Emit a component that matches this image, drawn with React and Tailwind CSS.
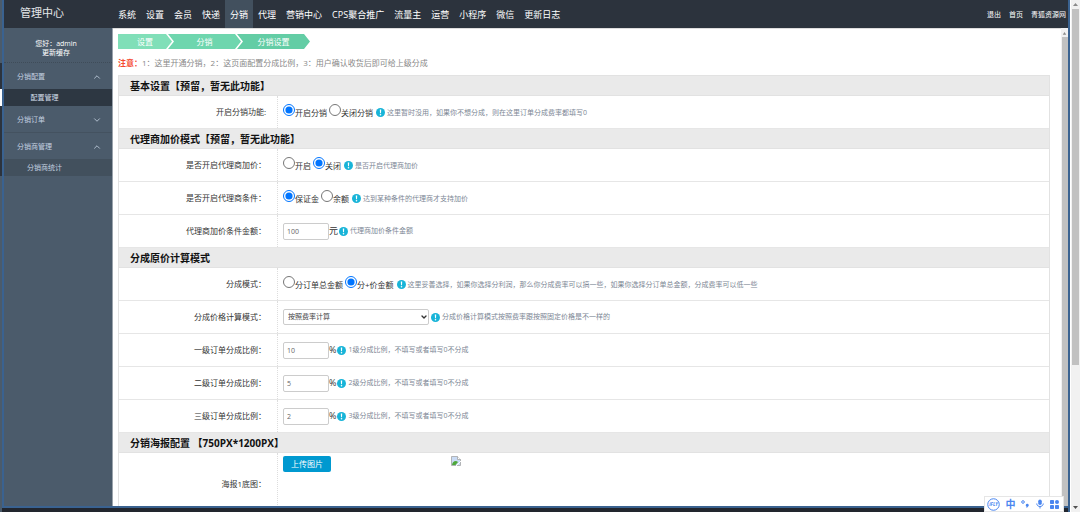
import { useState } from 'react';
import { ChevronDown, ChevronUp } from 'lucide-react';

const navItems = [
  '系统', '设置', '会员', '快递', '分销', '代理', '营销中心', 'CPS聚合推广',
  '流量主', '运营', '小程序', '微信', '更新日志',
];

const userLinks = ['退出', '首页', '青狐资源网'];

function TopBar() {
  return (
    <header className="flex h-7 shrink-0 items-center bg-[#2c333d] text-white">
      <h1 className="w-[109px] pb-0.5 pl-4 text-[11px] leading-4 text-[#e4e7ea]">管理中心</h1>
      <nav className="flex h-full flex-1">
        {navItems.map((item) => (
          <a
            key={item}
            href="#"
            className={`flex items-center px-[5px] pt-0.5 text-[9px] leading-3 ${item === '分销' ? 'bg-[#42505e]' : ''}`}
          >
            {item}
          </a>
        ))}
      </nav>
      <div className="flex gap-2 pr-0.5 pt-0.5 text-[7px] leading-3">
        {userLinks.map((item) => (
          <a key={item} href="#">{item}</a>
        ))}
      </div>
    </header>
  );
}

function MenuGroup({ title, open, children }) {
  const Icon = open ? ChevronUp : ChevronDown;
  return (
    <li>
      <button type="button" className="flex h-[26px] w-full items-center justify-between pl-[13px] pr-[10px] pt-px">
        <span>{title}</span>
        <Icon className="h-2.5 w-2.5" strokeWidth={2} />
      </button>
      {children}
    </li>
  );
}

function SideBar() {
  return (
    <aside className="w-[109px] shrink-0 border-r border-[#9aa3ac] bg-[#4b5b6b] text-[7px] leading-[9px] text-[#c3d0e0]">
      <div className="flex h-[35px] flex-col items-center justify-center border-b border-dotted border-[#3f4c59] pr-1 pt-[5px] text-white">
        <span>您好：admin</span>
        <a href="#">更新缓存</a>
      </div>
      <ul>
        <MenuGroup title="分销配置" open>
          <a href="#" className="flex h-[17px] items-center justify-center bg-[#2d3742] pr-[27px] text-[#d5dfeb]">配置管理</a>
        </MenuGroup>
        <MenuGroup title="分销订单" />
        <li className="border-t border-[#445260]" />
        <MenuGroup title="分销商管理" open>
          <a href="#" className="flex h-[17px] items-center justify-center bg-[#42505d] pr-[27px]">分销商统计</a>
        </MenuGroup>
      </ul>
    </aside>
  );
}

function Steps() {
  return (
    <ol className="flex text-center text-[8px] leading-[15px] text-white">
      <li className="w-[54px] bg-[#80dfb8] [clip-path:polygon(0_0,calc(100%-6px)_0,100%_50%,calc(100%-6px)_100%,0_100%)]">设置</li>
      <li className="-ml-1 w-[73px] bg-[#6ed6ae] [clip-path:polygon(0_0,calc(100%-6px)_0,100%_50%,calc(100%-6px)_100%,0_100%,6px_50%)]">分销</li>
      <li className="-ml-1 w-[73px] bg-[#63cda5] [clip-path:polygon(0_0,calc(100%-6px)_0,100%_50%,calc(100%-6px)_100%,0_100%,6px_50%)]">分销设置</li>
    </ol>
  );
}

function SectionTitle({ children }) {
  return (
    <h2 className="flex h-5 items-center border-b border-[#e2e2e2] bg-[#eaeaea] pl-[11px] text-[10px] font-bold leading-4 text-[#111]">
      {children}
    </h2>
  );
}

function Hint({ children }) {
  return (
    <span className="ml-px flex items-center gap-[2px] text-[7px] leading-3 text-[#7d8795]">
      <svg viewBox="0 0 18 18" className="h-[9px] w-[9px]">
        <circle cx="9" cy="9" r="9" fill="#18b4d8" />
        <path d="M7.6 3h2.8l-.5 7.4H8.1z" fill="#fff" />
        <circle cx="9" cy="13.4" r="1.6" fill="#fff" />
      </svg>
      {children}
    </span>
  );
}

function Row({ label, htmlFor, children }) {
  const LabelTag = htmlFor ? 'label' : 'span';
  return (
    <div className="flex h-[33px] border-b border-[#e6e6e6] text-[8px] leading-3 text-[#333]">
      <div className="flex w-[159px] shrink-0 items-center justify-end border-r border-dotted border-[#ddd] pr-[11px]">
        <LabelTag htmlFor={htmlFor}>{label}</LabelTag>
      </div>
      <div className="flex flex-1 items-center pl-[5px]">{children}</div>
    </div>
  );
}

function RadioRow({ label, name, options, initial, hint }) {
  const [value, setValue] = useState(initial);
  return (
    <Row label={label}>
      <div className="flex items-center pt-px" role="radiogroup" aria-label={label}>
        {options.map((option) => (
          <label key={option} className="mr-[2px] flex items-center">
            <input
              type="radio"
              name={name}
              checked={value === option}
              onChange={() => setValue(option)}
              className="mb-[6px] h-3 w-3"
            />
            {option}
          </label>
        ))}
        <Hint>{hint}</Hint>
      </div>
    </Row>
  );
}

function InputRow({ label, id, value, unit, hint }) {
  return (
    <Row label={label} htmlFor={id}>
      <input
        id={id}
        type="text"
        defaultValue={value}
        className="h-[17px] w-[46px] rounded-xs border border-[#ccc] px-[3px] text-[7px] text-[#666]"
      />
      <span className="text-[9px]">{unit}</span>
      <Hint>{hint}</Hint>
    </Row>
  );
}

function SettingsForm() {
  return (
    <form className="mr-[11px] border border-b-0 border-[#e2e2e2]">
      <SectionTitle>基本设置【预留，暂无此功能】</SectionTitle>
      <RadioRow
        label="开启分销功能:"
        name="enabled"
        options={['开启分销', '关闭分销']}
        initial="开启分销"
        hint="这里暂时没用，如果你不想分成，则在这里订单分成费率都填写0"
      />
      <SectionTitle>代理商加价模式【预留，暂无此功能】</SectionTitle>
      <RadioRow label="是否开启代理商加价：" name="markup" options={['开启', '关闭']} initial="关闭" hint="是否开启代理商加价" />
      <RadioRow
        label="是否开启代理商条件："
        name="condition"
        options={['保证金', '余额']}
        initial="保证金"
        hint="达到某种条件的代理商才支持加价"
      />
      <InputRow label="代理商加价条件金额：" id="amount" value="100" unit="元" hint="代理商加价条件金额" />
      <SectionTitle>分成原价计算模式</SectionTitle>
      <RadioRow
        label="分成模式："
        name="mode"
        options={['分订单总金额', '分+价金额']}
        initial="分+价金额"
        hint="这里妥善选择，如果你选择分利润，那么你分成费率可以搞一些，如果你选择分订单总金额，分成费率可以低一些"
      />
      <Row label="分成价格计算模式：" htmlFor="calc">
        <div className="relative mr-px">
          <select id="calc" className="block h-4 w-[146px] appearance-none rounded-xs border border-[#ccc] pl-1 text-[7px] text-[#444]">
            <option>按照费率计算</option>
            <option>按照固定价格</option>
          </select>
          <ChevronDown className="pointer-events-none absolute right-px top-1 h-2 w-2 text-[#333]" strokeWidth={4} />
        </div>
        <Hint>分成价格计算模式按照费率跟按照固定价格是不一样的</Hint>
      </Row>
      <InputRow label="一级订单分成比例：" id="level1" value="10" unit="%" hint="1级分成比例，不填写或者填写0不分成" />
      <InputRow label="二级订单分成比例：" id="level2" value="5" unit="%" hint="2级分成比例，不填写或者填写0不分成" />
      <InputRow label="三级订单分成比例：" id="level3" value="2" unit="%" hint="3级分成比例，不填写或者填写0不分成" />
      <SectionTitle>分销海报配置 【750PX*1200PX】</SectionTitle>
      <div className="flex h-[62px] text-[8px] leading-3 text-[#333]">
        <div className="flex w-[159px] shrink-0 items-center justify-end border-r border-dotted border-[#ddd] pr-[11px]">
          海报1底图：
        </div>
        <div className="flex flex-1 items-start gap-[120px] pl-[5px] pt-[3px]">
          <button type="button" className="h-4 w-12 rounded-xs bg-[#0099d0] text-white">上传图片</button>
          <BrokenImage />
        </div>
      </div>
    </form>
  );
}

function BrokenImage() {
  return (
    <svg viewBox="0 0 20 20" className="h-[10px] w-[10px]">
      <path d="M1 1h12l6 6v12H1z" fill="#c9dbf5" stroke="#a0a0a0" strokeWidth="1.5" />
      <path d="M13 1v6h6" fill="#fff" stroke="#a0a0a0" strokeWidth="1.5" />
      <path d="M2 18c1-7 7-10 12-6l-5 6z" fill="#4ea83a" />
      <path d="M20 10 10 20" stroke="#fff" strokeWidth="2" />
    </svg>
  );
}

function ScrollBar({ className }) {
  return (
    <div className={`flex shrink-0 flex-col items-center bg-[#f1f1f1] ${className}`}>
      <svg viewBox="0 0 8 9" className="h-[9px] w-full shrink-0">
        <path d="M2 7l2-3 2 3z" fill="#8a8a8a" />
      </svg>
      <div className="min-h-0 w-full flex-1 pl-px">
        <div className="h-full bg-[#c1c1c1]" />
      </div>
    </div>
  );
}

function InputMethodBar() {
  return (
    <div className="absolute bottom-0 right-4 flex h-4 w-20 items-center justify-between border border-[#e6e6e6] bg-white px-[2px] pr-1 text-[#4a86f0]">
      <svg viewBox="0 0 26 26" className="h-[13px] w-[13px]" fill="none" stroke="currentColor">
        <circle cx="13" cy="13" r="11.5" strokeWidth="2" />
        <text x="13" y="16.500" textAnchor="middle" fontSize="9" fontWeight="bold" fontStyle="italic" fill="currentColor" stroke="none">iFLY</text>
      </svg>
      <span className="text-[10px] font-bold leading-3">中</span>
      <svg viewBox="0 0 16 16" className="h-2 w-2" fill="currentColor">
        <circle cx="4" cy="4" r="2.6" fill="none" stroke="currentColor" strokeWidth="2" />
        <path d="M9.500 10.500a3 3 0 1 1 4.500 2.500c-1 1.500-2 2.500-3.500 3l1-2.500a3 3 0 0 1-2-3z" />
      </svg>
      <svg viewBox="0 0 20 20" className="h-[10px] w-[10px]" fill="none" stroke="currentColor" strokeWidth="2">
        <rect x="6.500" y="1" width="7" height="11" rx="3.500" fill="currentColor" stroke="none" />
        <path d="M3.500 9c0 8 13 8 13 0M10 15v4" />
      </svg>
      <svg viewBox="0 0 18 18" className="h-[9px] w-[9px]" fill="currentColor">
        <rect width="8" height="8" rx="1.500" />
        <circle cx="14" cy="4" r="4" />
        <rect y="10" width="8" height="8" rx="1.500" />
        <rect x="10" y="10" width="8" height="8" rx="1.500" />
      </svg>
    </div>
  );
}

export default function App() {
  return (
    <div className="relative flex h-screen overflow-hidden bg-[#22262e] font-['Open_Sans','Noto_Sans_CJK_SC',sans-serif]">
      {/* edge of the window behind */}
      <div className="flex w-[2px] shrink-0 flex-col bg-[#4b5b6b]">
        <div className="mt-[63px] h-[26px] bg-[#2c333d]" />
        <div className="h-[17px] bg-white" />
        <div className="h-[70px] bg-[#2c333d]" />
      </div>

      <div className="mb-1 flex min-w-0 flex-1 flex-col border-b-2 border-l-2 border-[#3a6290]">
        <TopBar />
        <div className="flex min-h-0 flex-1">
          <SideBar />
          <main className="min-w-0 flex-1 overflow-hidden border-t border-[#ddd] bg-white pl-[5px] pt-[5px]">
            <Steps />
            <p className="pb-[6px] pt-2 text-[8px] leading-3 text-[#888]">
              <strong className="text-[#f5492f]">注意：</strong>
              1：这里开通分销，2：这页面配置分成比例，3：用户确认收货后即可给上级分成
            </p>
            <SettingsForm />
          </main>
          <ScrollBar className="w-[7px]" />
        </div>
      </div>

      <div className="w-[3px] shrink-0 border-l-2 border-[#3a6290] bg-white" />
      <div className="flex w-[9px] shrink-0 flex-col bg-[#f1f1f1]">
        <svg viewBox="0 0 9 9" className="h-[9px] w-[9px]">
          <path d="M2 6l2.500-3 2.500 3z" fill="#8a8a8a" />
        </svg>
        <div className="mx-px h-[356px] bg-[#c1c1c1]" />
        <svg viewBox="0 0 9 9" className="mt-auto h-[9px] w-[9px]">
          <path d="M2 3l2.500 3 2.500-3z" fill="#505050" />
        </svg>
      </div>
      <InputMethodBar />
    </div>
  );
}
